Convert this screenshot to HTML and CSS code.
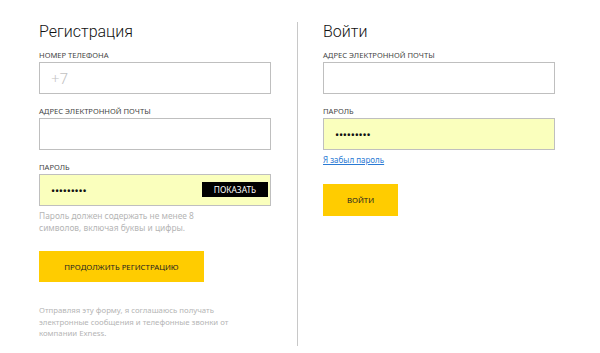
FILE: index.html
```html
<!DOCTYPE html>
<html lang="ru">
<head>
    <meta charset="UTF-8">
    <meta name="viewport" content="width=device-width, initial-scale=1.0">
    <title>Регистрация</title>
    <link rel="stylesheet" href="styles.css">
</head>
<body>
    <div class="auth-page">
        <section class="auth-col">
            <h2 class="auth-title">Регистрация</h2>

            <div class="field">
                <label class="field-label">Номер телефона</label>
                <div class="field-input"><span class="placeholder">+7</span></div>
            </div>

            <div class="field">
                <label class="field-label">Адрес электронной почты</label>
                <div class="field-input"></div>
            </div>

            <div class="field">
                <label class="field-label">Пароль</label>
                <div class="field-input field-filled">
                    <span class="dots">•••••••••</span>
                    <button class="btn-show">Показать</button>
                </div>
            </div>

            <p class="field-hint">Пароль должен содержать не менее 8<br>символов, включая буквы и цифры.</p>

            <button class="btn-yellow btn-wide">Продолжить регистрацию</button>

            <p class="disclaimer">Отправляя эту форму, я соглашаюсь получать<br>электронные сообщения и телефонные звонки от<br>компании Exness.</p>
        </section>

        <div class="divider"></div>

        <section class="auth-col">
            <h2 class="auth-title">Войти</h2>

            <div class="field">
                <label class="field-label">Адрес электронной почты</label>
                <div class="field-input"></div>
            </div>

            <div class="field">
                <label class="field-label">Пароль</label>
                <div class="field-input field-filled">
                    <span class="dots">•••••••••</span>
                </div>
            </div>

            <a href="#" class="forgot-link">Я забыл пароль</a>

            <button class="btn-yellow btn-login">Войти</button>
        </section>
    </div>
</body>
</html>
```

FILE: styles.css
```css
* {
    margin: 0;
    padding: 0;
    box-sizing: border-box;
}

:root {
    --yellow: #ffcc00;
    --autofill: #faffbd;
    --border: #bfbfbf;
    --text: #222222;
    --muted: #b5b5b5;
    --link: #2a7ad4;
}

body {
    font-family: "Noto Sans", "Open Sans", Arial, sans-serif;
    color: var(--text);
    background: #ffffff;
}

.auth-page {
    display: flex;
    align-items: stretch;
    padding: 22px 0 7px 39px;
    min-height: 353px;
}

.auth-col {
    display: flex;
    flex-direction: column;
    align-items: flex-start;
    width: 232px;
}

.divider {
    width: 1px;
    background: #c8c8c8;
    margin: 0 25px 0 26px;
}

.auth-title {
    font-family: Roboto, "Noto Sans", sans-serif;
    font-size: 16px;
    font-weight: 300;
    line-height: 20px;
    color: #111111;
}

.field {
    width: 100%;
    margin-top: 13px;
}

.auth-title + .field {
    margin-top: 9px;
}

.field-label {
    display: block;
    font-size: 7.6px;
    line-height: 9px;
    text-transform: uppercase;
    color: #444444;
    margin-bottom: 2px;
}

.field-input {
    height: 32px;
    border: 1px solid var(--border);
    display: flex;
    align-items: center;
    justify-content: space-between;
    padding: 0 2px 0 11px;
}

.field-filled {
    background: var(--autofill);
}

.placeholder {
    font-size: 15px;
    color: #c2c2c2;
    font-weight: 300;
}

.dots {
    font-size: 11px;
    letter-spacing: -0.2px;
    color: #111111;
}

.btn-show {
    width: 66px;
    height: 15px;
    background: #000000;
    color: #ffffff;
    border: none;
    font-family: inherit;
    font-size: 8.4px;
    text-transform: uppercase;
    margin-top: -1px;
}

.field-hint {
    font-size: 8.4px;
    line-height: 12px;
    color: var(--muted);
    margin-top: 4px;
}

.btn-yellow {
    background: var(--yellow);
    border: none;
    font-family: inherit;
    font-size: 7.8px;
    text-transform: uppercase;
    color: #222222;
    cursor: pointer;
}

.btn-wide {
    width: 165px;
    height: 31px;
    margin-top: 17px;
}

.disclaimer {
    font-size: 7.8px;
    line-height: 11.5px;
    color: var(--muted);
    margin-top: 23px;
}

.forgot-link {
    font-size: 8px;
    line-height: 10px;
    color: var(--link);
    margin-top: 5px;
}

.btn-login {
    width: 75px;
    height: 32px;
    margin-top: 19px;
}
```
